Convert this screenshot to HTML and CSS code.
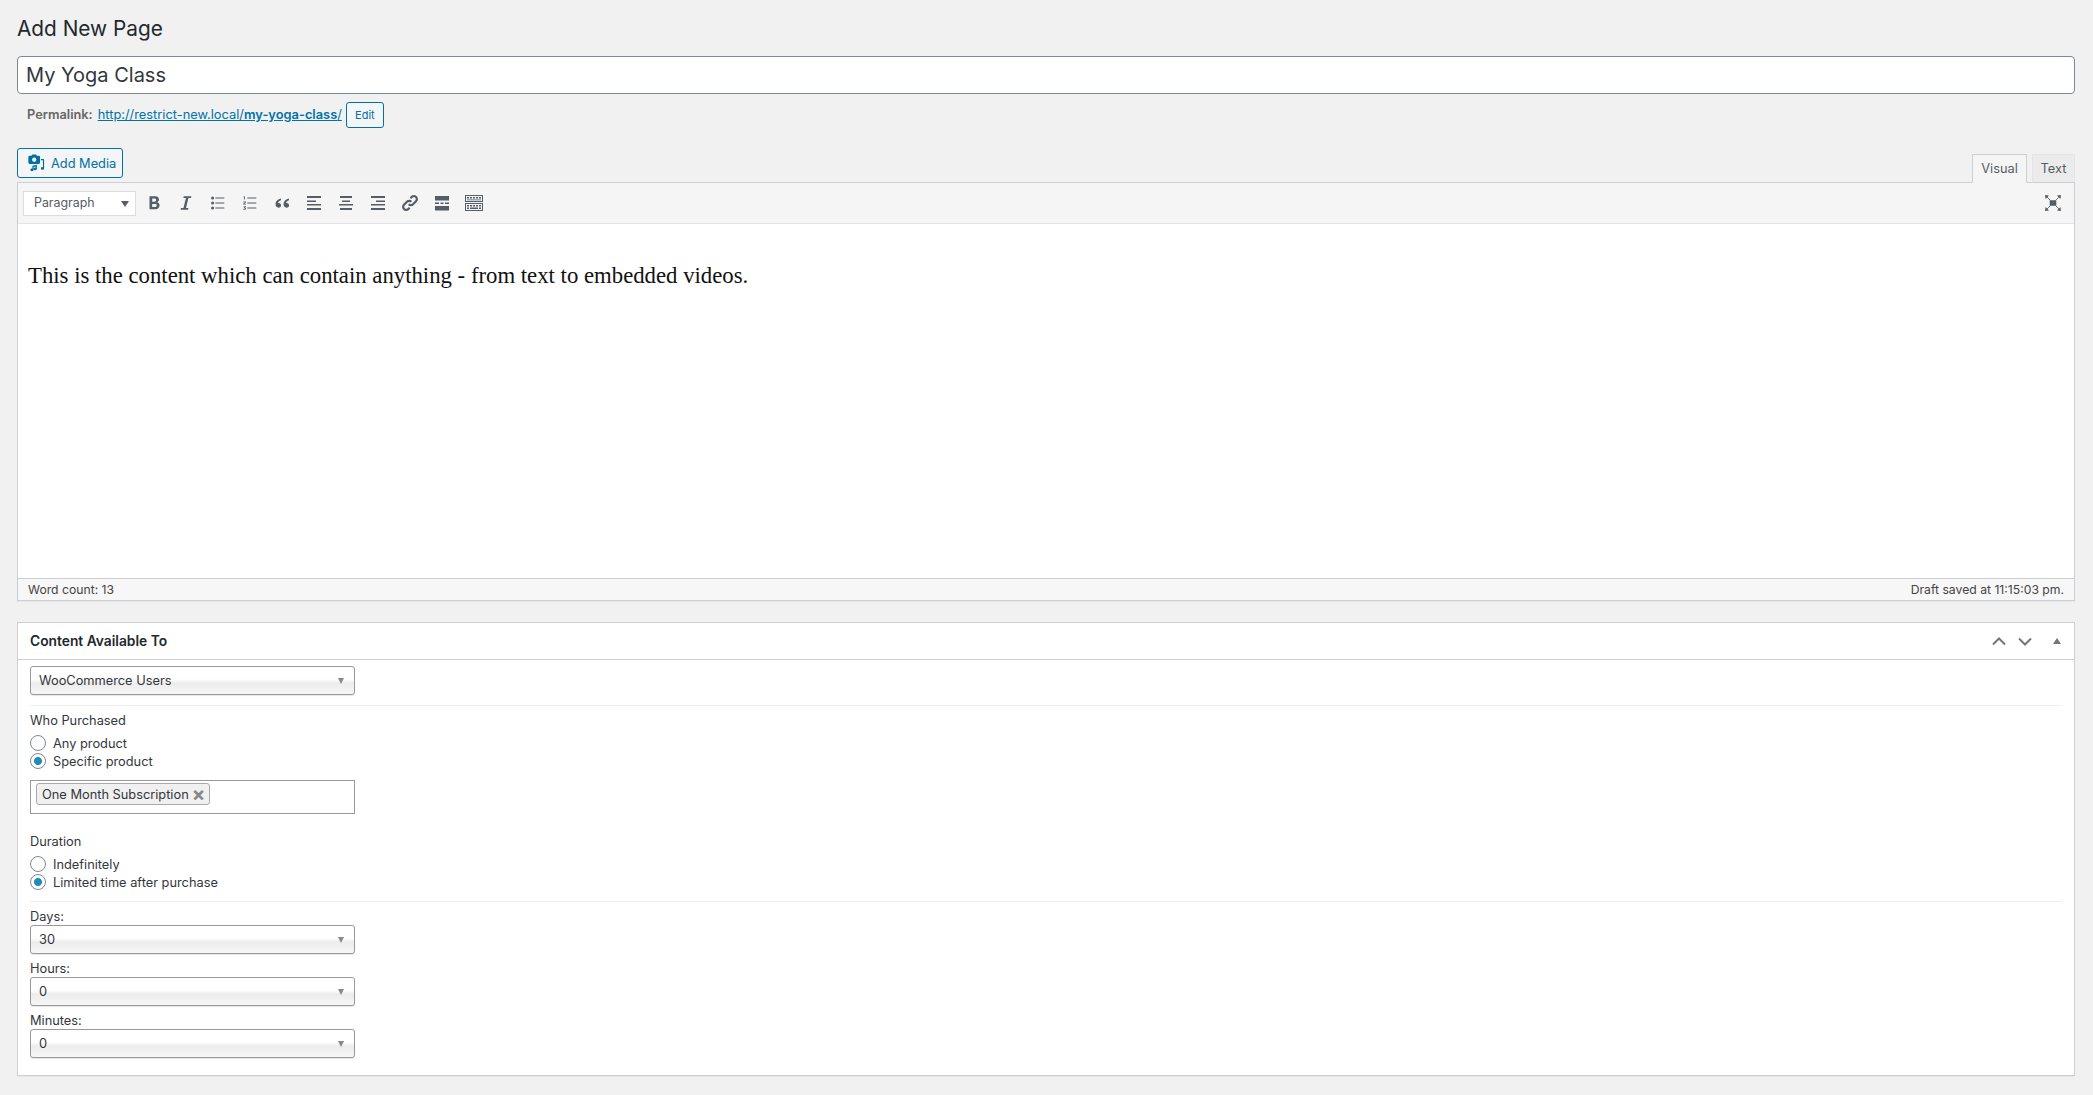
FILE: index.html
```html
<!DOCTYPE html>
<html lang="en">
<head>
<meta charset="utf-8">
<title>Add New Page</title>
<link rel="stylesheet" href="styles.css">
</head>
<body>
<main class="wrap">
  <h1 class="page-title">Add New Page</h1>
  <input class="title-input" type="text" value="My Yoga Class">
  <div class="permalink">
    <strong class="permalink-label">Permalink:</strong>
    <a class="permalink-url" href="#">http://restrict-new.local/<b>my-yoga-class</b>/</a>
    <button class="btn btn-small">Edit</button>
  </div>
  <div class="editor-head">
    <button class="btn btn-media">
      <svg class="media-icon" viewBox="0 0 20 20" width="20" height="20"><path fill-rule="evenodd" d="M3 2h2l1-1.500h4l1 1.500h2a1.500 1.500 0 0 1 1.500 1.500v6a1.500 1.500 0 0 1-1.500 1.500H3A1.500 1.500 0 0 1 1.500 9.500v-6A1.500 1.500 0 0 1 3 2zm5 2a2.400 2.400 0 1 0 0 4.800A2.400 2.400 0 0 0 8 4z"/><path d="M6 13l5-1v4.500a1.800 1.500 0 1 1-1.300-1.400V14l-2.400.5v3a1.800 1.500 0 1 1-1.300-1.400zM15.500 5.500H18a1 1 0 0 1 1 1v9.500a1.800 1.500 0 1 1-1.300-1.400V7h-2.200z"/></svg>
      Add Media
    </button>
    <div class="tabs">
      <span class="tab tab-active">Visual</span>
      <span class="tab">Text</span>
    </div>
  </div>
  <section class="editor">
    <div class="toolbar">
      <div class="format-select">Paragraph<i class="caret"></i></div>
      <span class="tool tool-sm"><svg viewBox="0 0 20 20"><path d="M5 2.500h6.200c2.700 0 4.300 1.300 4.300 3.500 0 1.500-.8 2.600-2.100 3.100 1.700.4 2.800 1.700 2.800 3.500 0 2.500-1.800 4.400-4.700 4.400H5zm3 2.500v3.500h2.500c1.100 0 1.900-.7 1.900-1.800S11.600 5 10.500 5zm0 6v3.500h3c1.200 0 2-.7 2-1.800S12.700 11 11.500 11z"/></svg></span>
      <span class="tool tool-sm"><svg viewBox="0 0 20 20"><path d="M7.500 2.500h8.500l-.4 2h-2.900L10 15.500h2.700l-.4 2H4l.4-2h2.800L9.900 4.500H7.100z"/></svg></span>
      <span class="tool tool-sm"><svg viewBox="0 0 20 20"><circle cx="4" cy="4.500" r="1.700"/><circle cx="4" cy="10" r="1.700"/><circle cx="4" cy="15.500" r="1.700"/><path d="M7 4h10v1H7zM7 9.500h10v1H7zM7 15h10v1H7z"/></svg></span>
      <span class="tool tool-sm"><svg viewBox="0 0 20 20"><path d="M7 4h10v1H7zM7 9.500h10v1H7zM7 15h10v1H7z"/><path d="M3.300 2.500H4.300V6h-1V3.500H2.800zM2.500 8.300h3v.9L3.800 10.800h1.800v.8H2.500v-.8l1.800-1.700H2.500zM2.600 13.500h2.900v.8l-1 .9c.7.100 1.100.5 1.100 1.100 0 .8-.7 1.200-1.600 1.200-.6 0-1.100-.1-1.500-.3v-.8c.9.400 2 .400 2-.2 0-.4-.6-.5-1.300-.4v-.7l1-.8H2.600z"/></svg></span>
      <span class="tool"><svg viewBox="0 0 20 20"><path d="M9 5.500v1.700C7.300 7.900 6.300 8.800 6 10.100c.2-.1.500-.1.800-.1 1.400 0 2.300 1 2.300 2.300 0 1.400-1.100 2.400-2.500 2.400-1.700 0-3.100-1.300-3.100-3.600 0-3 2.300-4.900 5.500-5.600zM17 5.500v1.700c-1.700.7-2.700 1.600-3 2.900.2-.1.500-.1.800-.1 1.400 0 2.300 1 2.300 2.300 0 1.400-1.100 2.400-2.500 2.400-1.700 0-3.100-1.300-3.100-3.600 0-3 2.300-4.900 5.500-5.600z"/></svg></span>
      <span class="tool"><svg viewBox="0 0 20 20"><path d="M3 3h14v2H3zM3 7.500h9v1.500H3zM3 11h14v1.500H3zM3 15h14v2H3z"/></svg></span>
      <span class="tool"><svg viewBox="0 0 20 20"><path d="M4 3h12v2H4zM6 7.500h8v1.500H6zM3 11h14v1.500H3zM4 15h12v2H4z"/></svg></span>
      <span class="tool"><svg viewBox="0 0 20 20"><path d="M3 3h14v2H3zM8 7.500h9v1.500H8zM3 11h14v1.500H3zM3 15h14v2H3z"/></svg></span>
      <span class="tool"><svg viewBox="0 0 20 20" class="stroke-icon"><path d="M8.700 11.300a3 3 0 0 0 4.300 0l3-3a3 3 0 0 0-4.300-4.300l-1.300 1.300"/><path d="M11.300 8.700a3 3 0 0 0-4.300 0l-3 3A3 3 0 0 0 8.300 16l1.300-1.300"/></svg></span>
      <span class="tool"><svg viewBox="0 0 20 20"><path d="M3 3h14v4.500H3zM3 13h14v4.500H3zM3 9.500h4v1.500H3zM8.500 9.500h3v1.500h-3zM13 9.500h4v1.500h-4z"/></svg></span>
      <span class="tool"><svg viewBox="0 0 20 20"><path fill-rule="evenodd" d="M1 2h18v7H1zm1 1v5h16V3zM1 10h18v8H1zm1 1v6h16v-6zM3 4h2v1.500H3zM6 4h2v1.500H6zM9 4h2v1.500H9zM12 4h2v1.500h-2zM15 4h2v1.500h-2zM3 6.500h14v.8H3zM3 12h2v1.500H3zM6 12h2v1.500H6zM9 12h2v1.500H9zM12 12h2v1.500h-2zM15 12h2v1.500h-2zM3 14.500h2V16H3zM6 14.500h8V16H6zM15 14.500h2V16h-2z"/></svg></span>
      <span class="tool tool-end"><svg viewBox="0 0 16 16"><path d="M4.700 5.300h6.600v5.400H4.700zM0 0l4 .6L.6 4zM16 0l-.6 4L12 .6zM0 16l.6-4L4 15.400zM16 16l-4-.6 3.400-3.400z"/><path class="thin" d="M1 1l4.500 4.500M15 1l-4.500 4.500M1 15l4.500-4.500M15 15l-4.500-4.500"/></svg></span>
    </div>
    <div class="editor-body">
      <p>This is the content which can contain anything - from text to embedded videos.</p>
    </div>
    <div class="status-bar">
      <span>Word count: 13</span>
      <span>Draft saved at 11:15:03 pm.</span>
    </div>
  </section>

  <section class="metabox">
    <header class="metabox-head">
      <h2>Content Available To</h2>
      <div class="metabox-controls">
        <svg class="chev" viewBox="0 0 14 9"><path d="M1 7.500 7 1.500l6 6"/></svg>
        <svg class="chev" viewBox="0 0 14 9"><path d="M1 1.500 7 7.500l6-6"/></svg>
        <svg class="tri" viewBox="0 0 8 6"><path d="M4 0l4 6H0z"/></svg>
      </div>
    </header>
    <div class="metabox-body">
      <div class="fake-select">WooCommerce Users<i class="select-caret"></i></div>
      <hr class="rule rule-a">
      <div class="group-label">Who Purchased</div>
      <label class="radio"><span class="radio-dot"></span>Any product</label>
      <label class="radio"><span class="radio-dot radio-on"></span>Specific product</label>
      <div class="token-box"><span class="token">One Month Subscription<span class="token-x">×</span></span></div>
      <div class="group-label duration-label">Duration</div>
      <label class="radio"><span class="radio-dot"></span>Indefinitely</label>
      <label class="radio"><span class="radio-dot radio-on"></span>Limited time after purchase</label>
      <hr class="rule rule-b">
      <div class="field-label">Days:</div>
      <div class="fake-select">30<i class="select-caret"></i></div>
      <div class="field-label">Hours:</div>
      <div class="fake-select">0<i class="select-caret"></i></div>
      <div class="field-label">Minutes:</div>
      <div class="fake-select">0<i class="select-caret"></i></div>
    </div>
  </section>
</main>
</body>
</html>
```
FILE: styles.css
```css
* { box-sizing: border-box; }
html, body { margin: 0; padding: 0; height: 100%; }
body {
  background: #f1f1f1;
  color: #32373c;
  font-family: Inter, "Liberation Sans", sans-serif;
  font-size: 12.8px;
  overflow: hidden;
}
.wrap { padding: 0 18px 0 17px; }
.page-title {
  margin: 0;
  padding-top: 13px;
  height: 56px;
  font-size: 20.8px;
  line-height: 32px;
  font-weight: 400;
  color: #23282d;
}
.title-input {
  display: block;
  width: 100%;
  height: 38px;
  padding: 0 8px;
  border: 1px solid #7e8993;
  border-radius: 4px;
  background: #fff;
  color: #32373c;
  font-family: inherit;
  font-size: 20px;
  outline: none;
}
.permalink {
  display: flex;
  align-items: center;
  height: 25px;
  margin-top: 8px;
  padding-left: 10px;
  color: #666;
}
.permalink-label { font-size: 12.8px; font-weight: 600; margin-right: 5px; }
.permalink-url { color: #0073aa; font-size: 12.85px; text-decoration: underline; }
.permalink-url b { font-weight: 600; }
.btn {
  border: 1px solid #0071a1;
  border-radius: 3px;
  background: #f3f5f6;
  color: #0071a1;
  font-family: inherit;
  padding: 0;
}
.btn-small { width: 38px; height: 26px; margin-left: 4px; font-size: 11px; }
.editor-head {
  display: flex;
  justify-content: space-between;
  align-items: flex-end;
  height: 55px;
}
.btn-media {
  display: flex;
  align-items: center;
  width: 106px;
  height: 30px;
  margin-bottom: 4px;
  padding-left: 9px;
  font-size: 12.8px;
}
.media-icon { width: 18px; height: 18px; margin-right: 6px; fill: #0071a1; }
.tabs { display: flex; margin-bottom: -1px; position: relative; z-index: 1; }
.tab {
  display: block;
  width: 43px;
  height: 29px;
  line-height: 27px;
  margin-left: 5px;
  text-align: center;
  background: #ebebeb;
  border: 1px solid #e2e4e7;
  border-bottom: 1px solid #ccd0d4;
  color: #555d66;
  font-size: 12.8px;
}
.tab-active { width: 55px; background: #f5f5f5; border-color: #ccd0d4; border-bottom-color: #f5f5f5; }
.editor {
  background: #fff;
  border: 1px solid #ccd0d4;
  box-shadow: 0 1px 1px rgba(0,0,0,.04);
}
.toolbar {
  display: flex;
  align-items: center;
  height: 41px;
  padding-left: 5px;
  background: #f5f5f5;
  border-bottom: 1px solid #e2e4e7;
}
.format-select {
  position: relative;
  width: 113px;
  height: 25px;
  line-height: 22px;
  padding-left: 10px;
  margin-right: 2px;
  background: #fff;
  border: 1px solid #ddd;
  color: #555d66;
  font-size: 12.4px;
}
.caret {
  position: absolute;
  right: 6px;
  top: 9px;
  border-left: 4px solid transparent;
  border-right: 4px solid transparent;
  border-top: 6px solid #555d66;
}
.tool { display: flex; flex: none; width: 32px; height: 32px; align-items: center; justify-content: center; }
.tool svg { width: 20px; height: 20px; fill: #555d66; }
.tool-sm svg { width: 18px; height: 18px; }
.tool .stroke-icon { fill: none; stroke: #555d66; stroke-width: 2.2; }
.tool-end { margin-left: auto; margin-right: 5px; }
.tool-end svg { width: 16px; height: 16px; }
.thin { fill: none; stroke: #555d66; stroke-width: .8; }
.editor-body { height: 354px; padding: 37px 10px 0; }
.editor-body p {
  margin: 0;
  font-family: "Liberation Serif", serif;
  font-size: 22.75px;
  line-height: 30px;
  color: #111;
}
.status-bar {
  display: flex;
  justify-content: space-between;
  align-items: center;
  height: 22px;
  padding: 0 10px;
  background: #f7f7f7;
  border-top: 1px solid #ccd0d4;
  font-size: 12.2px;
  color: #444;
}
.metabox {
  margin-top: 21px;
  background: #fff;
  border: 1px solid #ccd0d4;
  box-shadow: 0 1px 1px rgba(0,0,0,.04);
  height: 454px;
}
.metabox-head {
  display: flex;
  justify-content: space-between;
  align-items: center;
  height: 37px;
  padding: 0 13px 0 12px;
  border-bottom: 1px solid #ccd0d4;
}
.metabox-head h2 { margin: 0; font-size: 13.8px; font-weight: 600; color: #23282d; }
.metabox-controls { display: flex; align-items: center; }
.chev { width: 14px; height: 9px; margin-right: 12px; fill: none; stroke: #72777c; stroke-width: 2; }
.tri { width: 8px; height: 6px; margin-left: 9px; fill: #72777c; }
.metabox-body { padding: 6px 12px 0; }
.fake-select {
  position: relative;
  width: 325px;
  height: 29px;
  line-height: 28px;
  padding-left: 8px;
  border: 1px solid #999;
  border-radius: 3px;
  background: linear-gradient(#fff 0, #fff 45%, #ececec 60%, #f7f7f7 100%);
  box-shadow: 0 1px 1px rgba(0,0,0,.1);
  font-size: 12.8px;
  color: #32373c;
}
.select-caret {
  position: absolute;
  right: 10px;
  top: 11px;
  border-left: 3.5px solid transparent;
  border-right: 3.5px solid transparent;
  border-top: 6px solid #888;
}
.rule { margin: 0; border: 0; border-top: 1px solid #eee; width: 100%; }
.rule-a { margin-top: 10px; }
.rule-b { margin-top: 10px; }
.group-label { margin-top: 7px; line-height: 16px; }
.radio { display: flex; align-items: center; height: 18px; }
.group-label + .radio { margin-top: 5px; }
.radio-dot {
  width: 16px;
  height: 16px;
  margin-right: 7px;
  border: 1px solid #7e8993;
  border-radius: 50%;
  background: #fff;
}
.radio-on { background: radial-gradient(circle, #1e8cbe 0, #1e8cbe 3.6px, #fff 4.4px); }
.token-box {
  width: 325px;
  height: 34px;
  margin-top: 10px;
  padding: 2px 5px;
  border: 1px solid #999;
  background: #fff;
}
.token {
  display: inline-flex;
  align-items: center;
  height: 22px;
  padding: 0 4px 0 5px;
  border: 1px solid #aaa;
  border-radius: 3px;
  background: #f0f0f0;
}
.token-x { margin-left: 3px; font-size: 20px; font-weight: 700; color: #888; line-height: 1; }
.duration-label { margin-top: 20px; }
.field-label { line-height: 16px; margin-top: 7px; }
```
